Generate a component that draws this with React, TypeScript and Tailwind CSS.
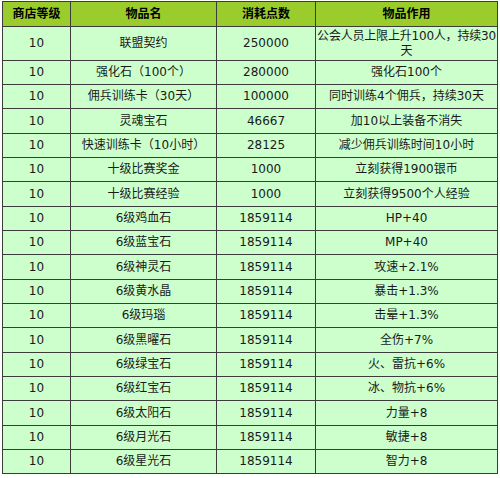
const rows: [string, string, string, React.ReactNode][] = [
  ['10', '联盟契约', '250000', <><span className="whitespace-nowrap tracking-[-0.2px]">公会人员上限上升100人，持续30</span><br />天</>],
  ['10', '强化石（100个）', '280000', '强化石100个'],
  ['10', '佣兵训练卡（30天）', '100000', '同时训练4个佣兵，持续30天'],
  ['10', '灵魂宝石', '46667', '加10以上装备不消失'],
  ['10', '快速训练卡（10小时）', '28125', '减少佣兵训练时间10小时'],
  ['10', '十级比赛奖金', '1000', '立刻获得1900银币'],
  ['10', '十级比赛经验', '1000', '立刻获得9500个人经验'],
  ['10', '6级鸡血石', '1859114', 'HP+40'],
  ['10', '6级蓝宝石', '1859114', 'MP+40'],
  ['10', '6级神灵石', '1859114', '攻速+2.1%'],
  ['10', '6级黄水晶', '1859114', '暴击+1.3%'],
  ['10', '6级玛瑙', '1859114', '击晕+1.3%'],
  ['10', '6级黑曜石', '1859114', '全伤+7%'],
  ['10', '6级绿宝石', '1859114', '火、雷抗+6%'],
  ['10', '6级红宝石', '1859114', '冰、物抗+6%'],
  ['10', '6级太阳石', '1859114', '力量+8'],
  ['10', '6级月光石', '1859114', '敏捷+8'],
  ['10', '6级星光石', '1859114', '智力+8'],
];

const cell = 'border border-[#3c3c3c] text-center align-middle p-0 whitespace-nowrap';

export default function App() {
  return (
    <div
      className="w-[500px] h-[478px] overflow-hidden bg-white pt-[1px] pl-[2px] text-[12px] leading-[15px] text-[#1a1a1a]"
      style={{ fontFamily: '"DejaVu Sans", "Noto Sans CJK SC", sans-serif' }}
    >
      <table className="border-collapse table-fixed w-[495px]">
        <colgroup>
          <col className="w-[68px]" />
          <col className="w-[146px]" />
          <col className="w-[99px]" />
          <col className="w-[182px]" />
        </colgroup>
        <thead>
          <tr className="h-[25px] bg-[#9acc2c] font-bold text-black">
            <th className={cell}>商店等级</th>
            <th className={cell}>物品名</th>
            <th className={cell}>消耗点数</th>
            <th className={cell}>物品作用</th>
          </tr>
        </thead>
        <tbody className="bg-[#ccffcc]">
          {rows.map(([lv, name, cost, effect], i) => (
            <tr key={i} className={i === 0 ? 'h-[34px]' : i % 3 === 0 ? 'h-[25px]' : 'h-[24px]'}>
              <td className={cell}>{lv}</td>
              <td className={cell}>{name}</td>
              <td className={cell}>{cost}</td>
              <td className={cell}>{effect}</td>
            </tr>
          ))}
        </tbody>
      </table>
    </div>
  );
}
